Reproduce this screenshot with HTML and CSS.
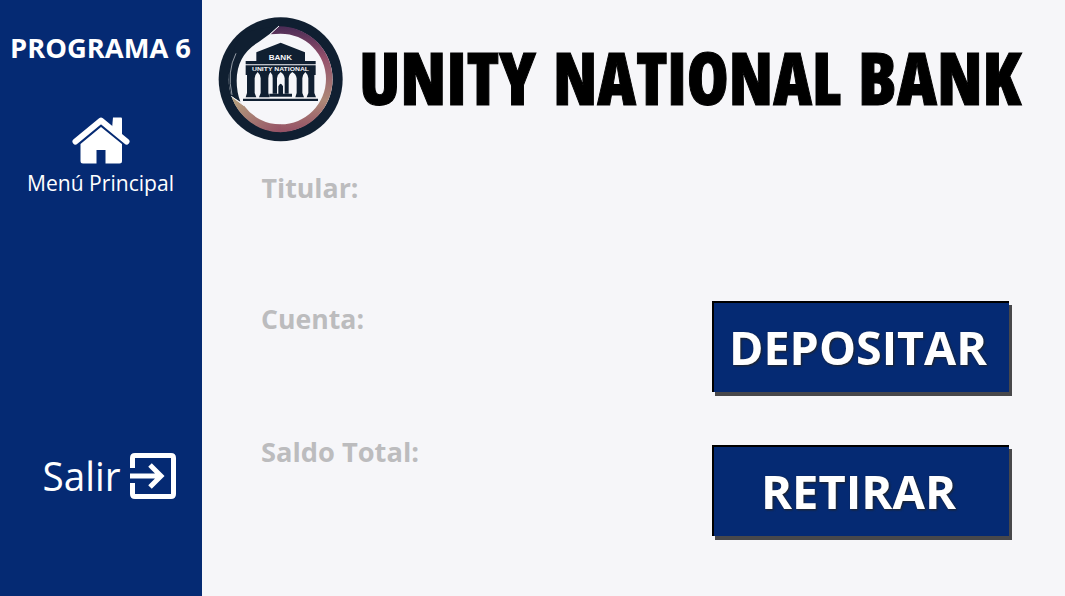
FILE: index.html
```html
<!DOCTYPE html>
<html lang="es">
<head>
<meta charset="utf-8">
<title>Unity National Bank</title>
<link rel="stylesheet" href="styles.css">
</head>
<body>
<div class="app">
  <aside class="sidebar">
    <svg class="program" viewBox="0 0 202 40"><text x="10" y="29" textLength="181" lengthAdjust="spacingAndGlyphs">PROGRAMA 6</text></svg>
    <a class="home">
      <svg class="home-icon" viewBox="0 0 58 48">
        <path d="M3.500 24.500 29 3.500 54.500 24.500" fill="none" stroke="#fff" stroke-width="6" stroke-linecap="round" stroke-linejoin="round"/>
        <path d="M41 0.500h8q1 0 1 1v18l-10-8z" fill="#fff"/>
        <path d="M29 10 50 27v17q0 2.500-2.500 2.500H33.500V33h-9v13.500H11Q8.500 46.500 8.500 44V27z" fill="#fff"/>
      </svg>
      <svg class="home-label" viewBox="0 0 202 34"><text x="27" y="26" textLength="147" lengthAdjust="spacingAndGlyphs">Menú Principal</text></svg>
    </a>
    <a class="exit">
      <svg class="exit-label" viewBox="0 0 80 50"><text x="0.500" y="39.500" textLength="78" lengthAdjust="spacingAndGlyphs">Salir</text></svg>
      <svg class="exit-icon" viewBox="0 0 46 46" fill="none" stroke="#fff">
        <path d="M2.500 15V5Q2.500 2.500 5 2.500H41Q43.500 2.500 43.500 5V41Q43.500 43.500 41 43.500H5Q2.500 43.500 2.500 41V30" stroke-width="5"/>
        <path d="M0 23H31M20 12 31 23 20 34" stroke-width="5"/>
      </svg>
    </a>
  </aside>
  <main class="main">
    <header class="header">
      <svg class="logo" viewBox="0 0 420 420">
        <defs>
          <linearGradient id="ring" x1="0" y1="0" x2="0" y2="1">
            <stop offset="0" stop-color="#4a2b55"/><stop offset=".3" stop-color="#94506b"/>
            <stop offset=".7" stop-color="#ad8877"/><stop offset="1" stop-color="#955065"/>
          </linearGradient>
          <linearGradient id="tail" x1="0" y1="0" x2="1" y2="1">
            <stop offset="0" stop-color="#b7a57f"/><stop offset="1" stop-color="#955065"/>
          </linearGradient>
        </defs>
        <circle cx="212" cy="208" r="186" fill="#101f31"/>
        <circle cx="212" cy="208" r="156" fill="#f6f6f9"/>
        <path d="M205 49A159 159 0 0 1 212 367V343A136 136 0 0 0 212 71L181 73Z" fill="url(#ring)"/>
        <path d="M64 259A159 159 0 0 0 213 367V343A136 136 0 0 1 101 286Z" fill="url(#tail)"/>
        <path d="M97 68 210 45 179 72 146 96Q80 135 80 212 80 246 91 275L63 258Q38 160 97 68Z" fill="#101f31"/>
        <path d="M78 130Q50 185 66 255" fill="none" stroke="#d9dce2" stroke-width="2"/>
        <path d="M207 48 180 73 M64 259 102 287" fill="none" stroke="#f6f6f9" stroke-width="3"/>
        <g fill="#101f31">
          <path d="M139 155V127L212 98 285 127V155ZM107 153H317V163H107Z"/>
          <path d="M107 166H317V195H313V249L318 262H290L295 249V205Q293 192 286 186 279 192 277 205V249L282 262H256L260 249V205Q258 192 247 186 237 192 236 205V251H224V205Q222 192 212 186 203 192 201 205V251H188V205Q188 192 181 186 176 192 175 205V249L179 262H147L152 249V205Q150 192 143 186 136 192 134 205V249L139 262H107L111 249V195H107Z"/>
          <path d="M205 251V229Q212 214 219 229V251ZM178 251H246V260H178ZM99 266H324V273H99Z"/>
        </g>
        <text class="logo-name" x="176" y="150" font-size="21" textLength="70" lengthAdjust="spacingAndGlyphs">BANK</text>
        <text class="logo-name" x="126" y="183" font-size="18" textLength="171" lengthAdjust="spacingAndGlyphs">UNITY NATIONAL</text>
      </svg>
      <svg class="title" viewBox="0 0 672 80">
        <text x="-1" y="65" textLength="177" lengthAdjust="spacingAndGlyphs">UNITY</text>
        <text x="193" y="65" textLength="288" lengthAdjust="spacingAndGlyphs">NATIONAL</text>
        <text x="498" y="65" textLength="163" lengthAdjust="spacingAndGlyphs">BANK</text>
      </svg>
    </header>
    <section class="content">
      <div class="fields">
        <svg class="label" viewBox="0 0 170 40"><text x="0.500" y="29.500" textLength="97" lengthAdjust="spacingAndGlyphs">Titular:</text></svg>
        <svg class="label" viewBox="0 0 170 40"><text x="0" y="28.500" textLength="103" lengthAdjust="spacingAndGlyphs">Cuenta:</text></svg>
        <svg class="label" viewBox="0 0 170 40"><text x="0" y="30" textLength="158" lengthAdjust="spacingAndGlyphs">Saldo Total:</text></svg>
      </div>
      <div class="actions">
        <button class="btn"><svg viewBox="0 0 296 90"><text x="15" y="61.500" textLength="258" lengthAdjust="spacingAndGlyphs">DEPOSITAR</text></svg></button>
        <button class="btn"><svg viewBox="0 0 296 90"><text x="47" y="61.500" textLength="195" lengthAdjust="spacingAndGlyphs">RETIRAR</text></svg></button>
      </div>
    </section>
  </main>
</div>
</body>
</html>
```
FILE: styles.css
```css
* { box-sizing: border-box; }
body { margin: 0; font-family: "Open Sans", sans-serif; background: #f6f6f9; }
svg { display: block; overflow: visible; }
.app { display: flex; width: 1065px; height: 596px; overflow: hidden; }
.sidebar { width: 202px; flex: none; background: #052a73; fill: #fff; display: flex; flex-direction: column; padding-top: 29px; }
.program { width: 202px; height: 40px; font-size: 26px; font-weight: 700; }
.home { display: block; margin-top: 48px; }
.home-icon { width: 58px; height: 48px; margin-left: 72px; }
.home-label { width: 202px; height: 34px; font-size: 22.5px; font-weight: 500; }
.exit { display: flex; align-items: center; gap: 8px; margin: 252px 0 0 42px; }
.exit-label { width: 80px; height: 50px; font-size: 40px; font-weight: 500; }
.exit-icon { width: 46px; height: 46px; }
.main { flex: 1; }
.header { display: flex; align-items: flex-start; height: 150px; padding: 10px 0 0 8px; }
.logo { width: 140px; height: 140px; }
.logo-name { font-family: "Liberation Sans", sans-serif; font-weight: 700; fill: #f6f6f9; }
.title { width: 672px; height: 80px; margin: 30px 0 0 10px; font-size: 72px; font-weight: 800; font-stretch: 75%; fill: #000; stroke: #000; stroke-width: 1px; }
.content { display: flex; }
.fields { width: 450px; padding: 18px 0 0 59px; display: flex; flex-direction: column; gap: 92px; }
.label { width: 170px; height: 40px; font-size: 27.5px; font-weight: 700; fill: #bcbcbe; }
.actions { padding: 151px 0 0 60px; display: flex; flex-direction: column; gap: 53px; }
.btn { width: 297px; height: 91px; padding: 0; border: 0 solid #000; border-width: 2px 0 0 2px; background: #052a73; box-shadow: 3px 4px 0 #48484b; }
.btn svg { width: 296px; height: 90px; font-family: "Open Sans", sans-serif; font-size: 47px; font-weight: 700; fill: #fff; filter: drop-shadow(1px 1px 1px #222); }
```
